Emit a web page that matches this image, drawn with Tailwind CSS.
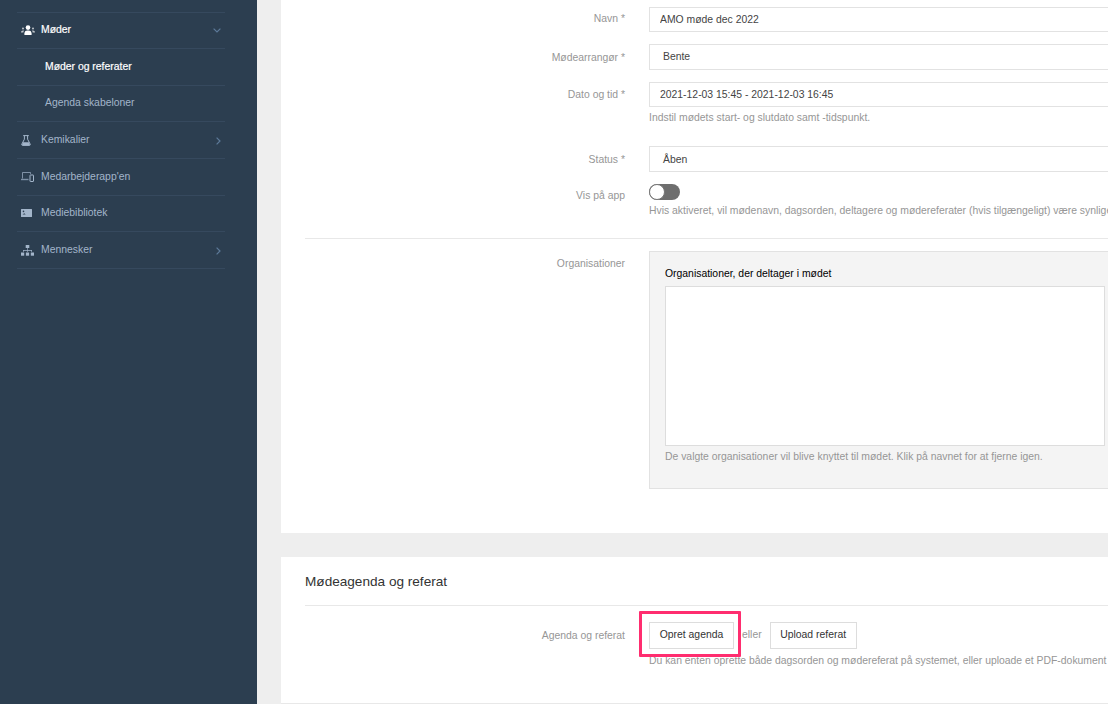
<!DOCTYPE html>
<html lang="en">
<head>
  <meta charset="UTF-8">
  <meta name="viewport" content="width=device-width, initial-scale=1.0">
  <title>Møder og referater</title>
  <script src="https://cdn.jsdelivr.net/npm/@tailwindcss/browser@4"></script>
</head>
<body class="bg-[#eeeeee] h-[704px] overflow-hidden flex font-['Liberation_Sans',Arial,sans-serif] text-[10.4px]">

  <!-- Sidebar -->
  <aside class="w-[257px] h-[704px] shrink-0 bg-[#2c3e50] pl-[17px] pr-[32px] pt-[12px] text-[#a3b5ca] text-[10.4px]">
    <nav class="border-t border-[#36495e]">
      <a class="flex items-center h-[36px] pb-[1px] border-b border-[#36495e] text-white [-webkit-text-stroke:0.2px_white]">
        <svg class="w-[14px] h-[10px] ml-[4px] mr-[6px] shrink-0" viewBox="0 0 14 10" fill="currentColor">
          <circle cx="7" cy="2.6" r="2.3"/><path d="M3.4 10V8a3 3 0 0 1 3-2.4h1.2a3 3 0 0 1 3 2.4v2z"/>
          <circle cx="2" cy="3.4" r="1" opacity=".7"/><circle cx="12" cy="3.4" r="1" opacity=".7"/>
          <path d="M0 7.600c0-1.400.8-2.200 2-2.200.5 0 .8.1 1 .3-.4.5-.6 1-.7 1.900zM14 7.600c0-1.400-.8-2.200-2-2.200-.5 0-.8.1-1 .3.4.5.6 1 .7 1.900z" opacity=".7"/>
        </svg>
        <span>Møder</span>
        <svg class="w-[8px] h-[5px] ml-auto mr-[4px] text-[#5d7a99]" viewBox="0 0 8 5" fill="none" stroke="currentColor" stroke-width="1.2"><path d="M.6.6 4 4 7.4.6"/></svg>
      </a>
      <a class="flex items-center h-[37px] pl-[28px] border-b border-[#36495e] text-white [-webkit-text-stroke:0.2px_white]">Møder og referater</a>
      <a class="flex items-center h-[36px] pl-[28px] pb-[1px] border-b border-[#36495e]">Agenda skabeloner</a>
      <a class="flex items-center h-[37px] border-b border-[#36495e]">
        <svg class="w-[10px] h-[11px] ml-[4px] mr-[10px] shrink-0" viewBox="0 0 10 11" fill="none" stroke="currentColor" stroke-width="1">
          <path d="M2.200.6h5.600M3.400.6v3.600L.9 9a1 1 0 0 0 .9 1.400h6.400a1 1 0 0 0 .9-1.400L6.600 4.200V.6"/>
          <path d="M2 7.200h6l1 3H1z" fill="currentColor" stroke="none"/>
        </svg>
        <span>Kemikalier</span>
        <svg class="w-[5px] h-[8px] ml-auto mt-[2px] mr-[4px] text-[#5d7a99]" viewBox="0 0 5 8" fill="none" stroke="currentColor" stroke-width="1.2"><path d="M.6.6 4 4 .6 7.4"/></svg>
      </a>
      <a class="flex items-center h-[37px] pb-[1px] border-b border-[#36495e]">
        <svg class="w-[13px] h-[10px] ml-[4px] mr-[7px] shrink-0" viewBox="0 0 13 10" fill="none" stroke="currentColor" stroke-width="1">
          <path d="M1.500 6.500V.5h8v1.400" opacity=".7"/><path d="M0 7.500h7.500" stroke-width="1.400" opacity=".7"/><rect x="9" y="3" width="3.500" height="6.500" rx=".4"/>
        </svg>
        <span>Medarbejderapp'en</span>
      </a>
      <a class="flex items-center h-[36px] pb-[1px] border-b border-[#36495e]">
        <svg class="w-[11px] h-[8px] ml-[4px] mr-[9px] shrink-0" viewBox="0 0 11 8" fill="currentColor">
          <path fill-rule="evenodd" d="M.5 0h10a.5.5 0 0 1 .5.5v7a.5.5 0 0 1-.5.5H.5A.5.5 0 0 1 0 7.500v-7A.5.5 0 0 1 .5 0zM2.500 1.600a.8.8 0 1 0 0 1.600.8.8 0 0 0 0-1.600zM1.500 5.500h3.200L3.300 4.200z"/>
        </svg>
        <span>Mediebibliotek</span>
      </a>
      <a class="flex items-center h-[37px] border-b border-[#36495e]">
        <svg class="w-[13px] h-[11px] ml-[4px] mr-[7px] shrink-0" viewBox="0 0 13 11" fill="currentColor">
          <rect x="4.700" y="0" width="3.600" height="3"/><path d="M6.200 3h.6v2H11v2h-.6V5.700H6.800V7h-.6V5.700H2.600V7H2V5h4.200z"/>
          <rect x="0" y="7.500" width="3.200" height="3.200"/><rect x="4.900" y="7.500" width="3.200" height="3.200"/><rect x="9.800" y="7.500" width="3.200" height="3.200"/>
        </svg>
        <span>Mennesker</span>
        <svg class="w-[5px] h-[8px] ml-auto mt-[2px] mr-[4px] text-[#5d7a99]" viewBox="0 0 5 8" fill="none" stroke="currentColor" stroke-width="1.2"><path d="M.6.6 4 4 .6 7.4"/></svg>
      </a>
    </nav>
  </aside>

  <!-- Main content -->
  <main class="ml-[24px] w-[827px] shrink-0 text-[#969696]">

    <section class="bg-white h-[533px] pl-[24px] pt-[7px] overflow-hidden">
      <div class="flex">
        <label class="w-[320px] shrink-0 text-right pt-[4px]">Navn *</label>
        <input value="AMO møde dec 2022" class="ml-[24px] w-[600px] h-[25px] shrink-0 border border-[#e2e2e2] px-[10px] pb-[1px] text-[#444]">
      </div>
      <div class="flex mt-[12px]">
        <label class="w-[320px] shrink-0 text-right pt-[6px]">Mødearrangør *</label>
        <div class="ml-[24px] w-[600px] h-[26px] shrink-0 border border-[#e2e2e2] pl-[13px] flex items-center text-[#444]">Bente</div>
      </div>
      <div class="flex mt-[12px]">
        <label class="w-[320px] shrink-0 text-right pt-[5px]">Dato og tid *</label>
        <div class="ml-[24px]">
          <input value="2021-12-03 15:45 - 2021-12-03 16:45" class="block w-[600px] h-[25px] border border-[#e2e2e2] px-[10px] pb-[1px] text-[#444]">
          <p class="mt-[4px] leading-[13px]">Indstil mødets start- og slutdato samt -tidspunkt.</p>
        </div>
      </div>
      <div class="flex mt-[22px]">
        <label class="w-[320px] shrink-0 text-right pt-[6px]">Status *</label>
        <div class="ml-[24px] w-[600px] h-[26px] shrink-0 border border-[#e2e2e2] pl-[13px] pt-[1px] flex items-center text-[#444]">Åben</div>
      </div>
      <div class="flex mt-[12px]">
        <label class="w-[320px] shrink-0 text-right pt-[4px]">Vis på app</label>
        <div class="ml-[24px] whitespace-nowrap">
          <div class="w-[31px] h-[16px] rounded-full bg-[#6e6e6e] relative">
            <span class="absolute left-0 top-0 w-[16px] h-[16px] rounded-full bg-white border border-[#777]"></span>
          </div>
          <p class="mt-[4px] leading-[13px]">Hvis aktiveret, vil mødenavn, dagsorden, deltagere og mødereferater (hvis tilgængeligt) være synlige</p>
        </div>
      </div>

      <hr class="mt-[21px] border-[#e8e8e8]">

      <div class="flex mt-[12px]">
        <label class="w-[320px] shrink-0 text-right pt-[5px]">Organisationer</label>
        <div class="ml-[24px] w-[600px] h-[238px] shrink-0 bg-[#f4f4f4] border border-[#e2e2e2] px-[15px] pt-[15px]">
          <h3 class="text-black leading-[13px]">Organisationer, der deltager i mødet</h3>
          <div class="mt-[6px] w-[440px] h-[160px] bg-white border border-[#dddddd]"></div>
          <p class="mt-[4px] leading-[13px]">De valgte organisationer vil blive knyttet til mødet. Klik på navnet for at fjerne igen.</p>
        </div>
      </div>
    </section>

    <section class="bg-white mt-[24px] h-[147px] border-b border-[#e8e8e8] pl-[24px] overflow-hidden">
      <h2 class="h-[49px] border-b border-[#e8e8e8] flex items-center pt-[3px] text-[13.6px] text-[#333]">Mødeagenda og referat</h2>
      <div class="flex mt-[16px]">
        <label class="w-[320px] shrink-0 text-right pt-[6px]">Agenda og referat</label>
        <div class="ml-[24px] whitespace-nowrap">
          <div class="flex items-center">
            <div class="relative">
              <button class="block w-[85px] h-[27px] pb-[2px] border border-[#dddddd] text-[#333]">Opret agenda</button>
              <span class="absolute left-[-10px] top-[-11px] w-[102px] h-[46px] border-[3px] border-[#ff2d6f] rounded-[1px]"></span>
            </div>
            <span class="ml-[8px] pb-[2px]">eller</span>
            <button class="ml-[8px] w-[87px] h-[27px] pb-[2px] border border-[#dddddd] text-[#333]">Upload referat</button>
          </div>
          <p class="mt-[5px] leading-[13px]">Du kan enten oprette både dagsorden og mødereferat på systemet, eller uploade et PDF-dokument</p>
        </div>
      </div>
    </section>
  </main>
</body>
</html>
